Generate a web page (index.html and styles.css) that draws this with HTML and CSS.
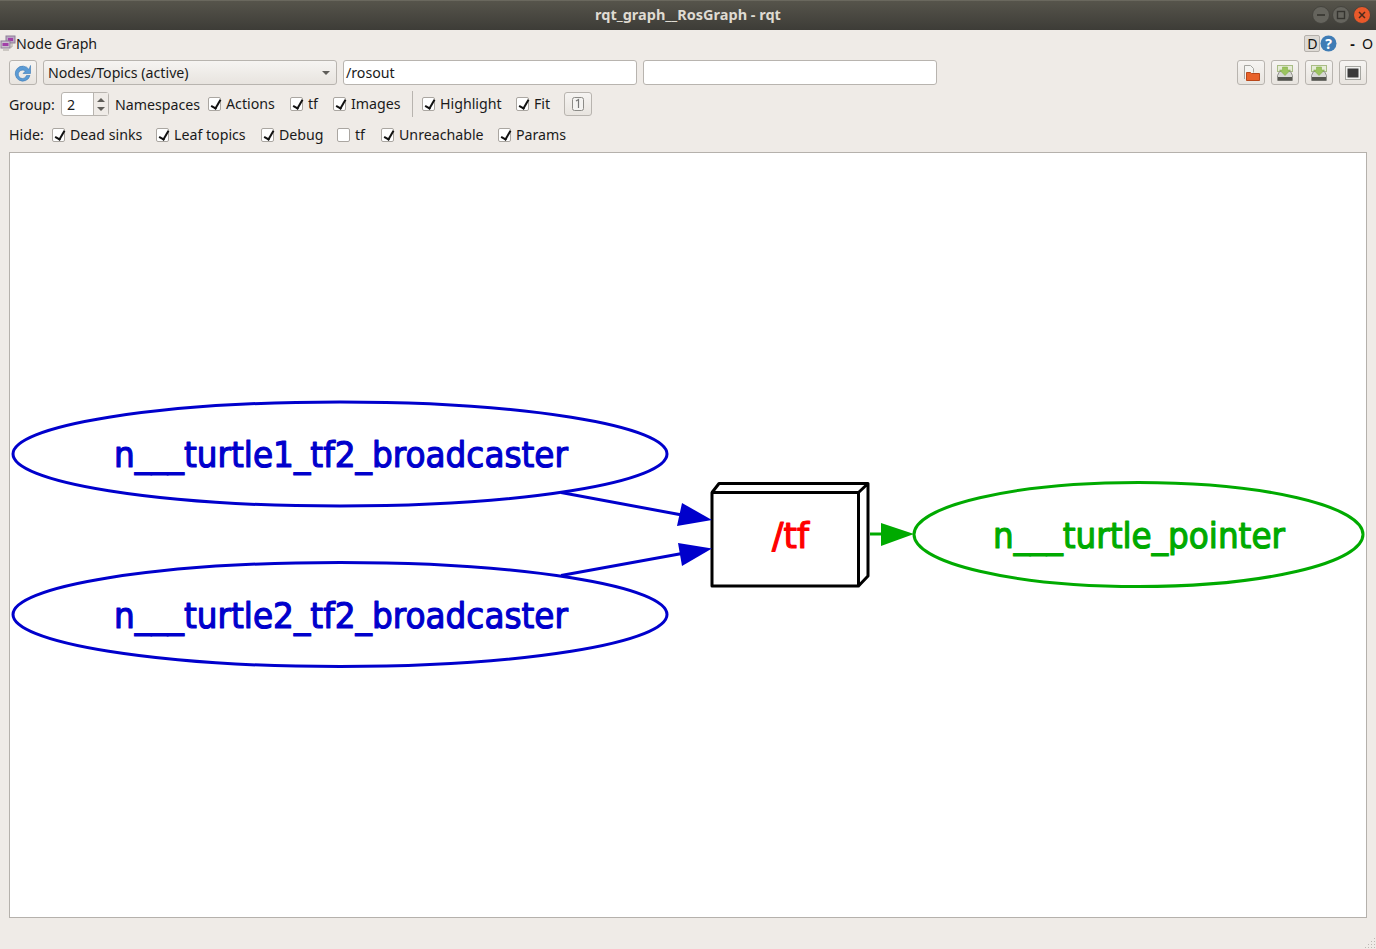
FILE: index.html
```html
<!DOCTYPE html>
<html lang="en">

<head>
  <meta charset="UTF-8">
  <title>rqt_graph__RosGraph - rqt</title>
  <link rel="stylesheet" href="styles.css">
</head>

<body>
  <div class="window">
    <header class="titlebar">
      <span class="title">rqt_graph__RosGraph - rqt</span>
      <div class="win-buttons">
        <svg class="win-btn" viewBox="0 0 18 18"><circle cx="9" cy="9" r="8.500" fill="#65645d" stroke="#45443e"/><path d="M5 9h8" stroke="#35342f" stroke-width="1.600"/></svg>
        <svg class="win-btn" viewBox="0 0 18 18"><circle cx="9" cy="9" r="8.500" fill="#65645d" stroke="#45443e"/><rect x="5.500" y="5.500" width="7" height="7" fill="none" stroke="#35342f" stroke-width="1.400"/></svg>
        <svg class="win-btn" viewBox="0 0 18 18"><circle cx="9" cy="9" r="8.500" fill="#e9592a" stroke="#45443e"/><path d="M6 6l6 6M12 6l-6 6" stroke="#4a2a1c" stroke-width="1.500"/></svg>
      </div>
    </header>

    <div class="plugin-bar">
      <svg class="plugin-icon" viewBox="0 0 16 16">
        <rect x="6" y="1" width="9" height="7" fill="#b9a6c4" stroke="#8d7f96"/>
        <rect x="8" y="3" width="5" height="3" fill="#a23fa8"/>
        <rect x="1" y="6" width="9" height="7" fill="#c9bfce" stroke="#8d7f96"/>
        <rect x="2.500" y="8" width="6" height="3" fill="#a23fa8"/>
        <path d="M3 15h6M12 8v4h-2" fill="none" stroke="#a9a5a0"/>
      </svg>
      <span class="plugin-name">Node Graph</span>
      <span class="bar-spacer"></span>
      <span class="help-d">D</span>
      <svg class="help-q" viewBox="0 0 17 17">
        <circle cx="8.500" cy="8.500" r="8" fill="#3f7cb5"/>
        <text x="8.500" y="13.500" text-anchor="middle" class="help-q-text">?</text>
      </svg>
      <span class="bar-dash">-</span>
      <span class="bar-o">O</span>
    </div>

    <div class="row row-top">
      <button class="tool-btn">
        <svg class="tool-icon" viewBox="0 0 18 18">
          <path d="M15 5.500A7.500 7.500 0 1 0 16 11.500h-3.500a4.200 4.200 0 1 1-1.200-4.300L9 9.500h7.500V1.500z" fill="#5b9bd5" stroke="#3a78b5" stroke-width=".6"/>
        </svg>
      </button>
      <div class="combo">
        <span>Nodes/Topics (active)</span>
        <span class="combo-arrow"></span>
      </div>
      <div class="text-input">/rosout</div>
      <div class="text-input"></div>
      <span class="bar-spacer"></span>
      <button class="tool-btn">
        <svg class="tool-icon" viewBox="0 0 18 18">
          <path d="M2.500 15V1.500h6l3 3v4" fill="#f4f4f2" stroke="#a5a5a0"/>
          <path d="M4.500 8.500h4l1 1h8v7h-13z" fill="#e8622a" stroke="#b9471a"/>
        </svg>
      </button>
      <button class="tool-btn">
        <svg class="tool-icon" viewBox="0 0 18 18">
          <rect x="1.500" y="1.500" width="15" height="6" fill="#e6ebd8" stroke="#a9bd85"/>
          <path d="M1.500 11.500l2-4h11l2 4v5h-15z" fill="#d8d8d4" stroke="#8f8f8a"/>
          <rect x="2" y="13" width="14" height="3.500" fill="#55554f"/>
          <path d="M6.500 3h5v3h3l-5.500 5.500L3.500 6h3z" fill="#9cc45f" stroke="#7aa83f" stroke-width=".5"/>
        </svg>
      </button>
      <button class="tool-btn">
        <svg class="tool-icon" viewBox="0 0 18 18">
          <rect x="1.500" y="1.500" width="15" height="6" fill="#e6ebd8" stroke="#a9bd85"/>
          <path d="M1.500 11.500l2-4h11l2 4v5h-15z" fill="#d8d8d4" stroke="#8f8f8a"/>
          <rect x="2" y="13" width="14" height="3.500" fill="#55554f"/>
          <path d="M6.500 3h5v3h3l-5.500 5.500L3.500 6h3z" fill="#9cc45f" stroke="#7aa83f" stroke-width=".5"/>
        </svg>
      </button>
      <button class="tool-btn">
        <svg class="tool-icon" viewBox="0 0 18 18">
          <rect x="1.500" y="2.500" width="15" height="13" fill="#f2f2f0" stroke="#a5a5a0"/>
          <rect x="3.500" y="4.500" width="11" height="9" fill="#3a3a3a"/>
        </svg>
      </button>
    </div>

    <div class="row row-group">
      <span class="label group-label">Group:</span>
      <div class="spin">
        <span class="spin-value">2</span>
        <span class="spin-arrows">
          <span class="spin-up"></span>
          <span class="spin-down"></span>
        </span>
      </div>
      <span class="label ns-label">Namespaces</span>
      <label class="check w-actions"><span class="box on"></span>Actions</label>
      <label class="check w-tf"><span class="box on"></span>tf</label>
      <label class="check w-images"><span class="box on"></span>Images</label>
      <span class="divider"></span>
      <label class="check w-highlight"><span class="box on"></span>Highlight</label>
      <label class="check w-fit"><span class="box on"></span>Fit</label>
      <button class="tool-btn small-btn">
        <svg class="tool-icon" viewBox="0 0 16 16">
          <rect x="2.500" y="1.500" width="11" height="13" rx="2" fill="#f4f3f1" stroke="#8c8b87"/>
          <path d="M6 5l2.500-1.500V12" fill="none" stroke="#777" stroke-width="1.200"/>
        </svg>
      </button>
    </div>

    <div class="row row-hide">
      <span class="label hide-label">Hide:</span>
      <label class="check w-dead"><span class="box on"></span>Dead sinks</label>
      <label class="check w-leaf"><span class="box on"></span>Leaf topics</label>
      <label class="check w-debug"><span class="box on"></span>Debug</label>
      <label class="check w-tf2"><span class="box"></span>tf</label>
      <label class="check w-unreach"><span class="box on"></span>Unreachable</label>
      <label class="check"><span class="box on"></span>Params</label>
    </div>

    <div class="canvas">
      <svg class="graph" viewBox="10 153 1356 764">
        <!-- nodes -->
        <ellipse class="edge-blue" cx="340" cy="454" rx="327" ry="52"/>
        <text class="node-label label-blue" x="114" y="467" textLength="454" lengthAdjust="spacingAndGlyphs">n___turtle1_tf2_broadcaster</text>
        <ellipse class="edge-blue" cx="340" cy="614.500" rx="327" ry="52"/>
        <text class="node-label label-blue" x="114" y="627.500" textLength="454" lengthAdjust="spacingAndGlyphs">n___turtle2_tf2_broadcaster</text>
        <ellipse class="edge-green" cx="1138.500" cy="534.500" rx="224.500" ry="52"/>
        <text class="node-label label-green" x="993" y="547.500" textLength="292" lengthAdjust="spacingAndGlyphs">n___turtle_pointer</text>

        <!-- topic box -->
        <path class="topic-box" d="M712 492.500H858.500V586H712zM712 492.500L719 483.500H868L858.500 492.500M868 483.500V576L858.500 586"/>
        <text class="node-label label-red" x="772" y="547.500" textLength="37" lengthAdjust="spacingAndGlyphs">/tf</text>

        <!-- edges -->
        <path class="edge-blue" d="M561 492.500L682 515"/>
        <polygon class="fill-blue" points="712,520 682,503 677,526"/>
        <path class="edge-blue" d="M561 575.500L682 553.500"/>
        <polygon class="fill-blue" points="712,548.500 678,543 682,566"/>
        <path class="edge-green" d="M870 534H884"/>
        <polygon class="fill-green" points="914,534 881,523 881,546"/>
      </svg>
    </div>

    <svg class="grip" viewBox="0 0 12 12">
      <g fill="#bdb9b3">
        <rect x="10" y="1" width="1" height="1"/>
        <rect x="7" y="4" width="1" height="1"/>
        <rect x="10" y="4" width="1" height="1"/>
        <rect x="4" y="7" width="1" height="1"/>
        <rect x="7" y="7" width="1" height="1"/>
        <rect x="10" y="7" width="1" height="1"/>
        <rect x="1" y="10" width="1" height="1"/>
        <rect x="4" y="10" width="1" height="1"/>
        <rect x="7" y="10" width="1" height="1"/>
        <rect x="10" y="10" width="1" height="1"/>
      </g>
    </svg>
  </div>
</body>

</html>
```

FILE: styles.css
```css
* {
  box-sizing: border-box;
}

html,
body {
  margin: 0;
  height: 100%;
  overflow: hidden;
}

body {
  background-color: #efebe7;
  color: #1a1a1a;
  font-family: "Noto Sans", "Open Sans", sans-serif;
  font-size: 14.2px;
}

.window {
  position: relative;
  width: 1376px;
  height: 949px;
  display: flex;
  flex-direction: column;
}

/* title bar */
.titlebar {
  position: relative;
  height: 30px;
  flex: none;
  display: flex;
  align-items: center;
  justify-content: center;
  padding-bottom: 3px;
  background: linear-gradient(#56544b, #3d3c37);
  border-top: 1px solid #6a685e;
}

.title {
  color: #dfdbd2;
  font-weight: 700;
  font-size: 14.5px;
}

.win-buttons {
  position: absolute;
  top: 5px;
  right: 5.500px;
  display: flex;
  gap: 2.500px;
}

.win-btn {
  width: 18px;
  height: 18px;
}

/* Node Graph bar */
.plugin-bar {
  height: 28px;
  padding-bottom: 2px;
  flex: none;
  display: flex;
  align-items: center;
}

.plugin-icon {
  width: 16px;
  height: 16px;
}

.bar-spacer {
  flex: 1;
}

.help-d {
  width: 16px;
  height: 17px;
  line-height: 15px;
  text-align: center;
  background-color: #dedad5;
  border: 1px solid #b5b1ac;
  border-radius: 2px;
  color: #111;
}

.help-q {
  width: 17px;
  height: 17px;
  margin-right: 1px;
}

.help-q-text {
  fill: #fff;
  font-size: 14px;
  font-weight: 700;
}

.bar-dash {
  margin-left: 12px;
  font-weight: 700;
  color: #111;
}

.bar-o {
  margin-left: 7px;
  margin-right: 3px;
  color: #111;
}

/* toolbar rows */
.row {
  display: flex;
  align-items: center;
  padding: 0 9px;
  flex: none;
}

.row-top {
  height: 25px;
  margin-top: 2px;
  gap: 6px;
}

.row-group {
  height: 24px;
  margin-top: 7px;
}

.row-hide {
  height: 21px;
  margin-top: 8px;
}

.tool-btn {
  width: 28px;
  height: 25px;
  padding: 0;
  display: flex;
  align-items: center;
  justify-content: center;
  background: linear-gradient(#f6f4f2, #e8e4df);
  border: 1px solid #b8b4af;
  border-radius: 3px;
}

.tool-icon {
  width: 18px;
  height: 18px;
}

.small-btn {
  height: 24px;
}

.small-btn .tool-icon {
  width: 16px;
  height: 16px;
}

.combo {
  width: 294px;
  height: 25px;
  padding: 0 6px 0 4px;
  display: flex;
  align-items: center;
  justify-content: space-between;
  background: linear-gradient(#f6f4f2, #e8e4df);
  border: 1px solid #b8b4af;
  border-radius: 3px;
}

.combo-arrow {
  width: 0;
  height: 0;
  border-left: 4px solid transparent;
  border-right: 4px solid transparent;
  border-top: 4px solid #5f5d59;
}

.text-input {
  width: 294px;
  height: 25px;
  padding: 0 2px;
  line-height: 23px;
  background-color: #fff;
  border: 1px solid #b8b4af;
  border-radius: 3px;
}

.label {
  white-space: nowrap;
}

.group-label {
  width: 52px;
}

.spin {
  width: 48px;
  height: 24px;
  display: flex;
  background-color: #fff;
  border: 1px solid #b8b4af;
  border-radius: 3px;
}

.spin-value {
  flex: 1;
  padding-left: 5px;
  line-height: 24px;
}

.spin-arrows {
  width: 15px;
  display: flex;
  flex-direction: column;
  align-items: center;
  justify-content: center;
  gap: 5px;
  background-color: #efebe7;
  border-left: 1px solid #b8b4af;
}

.spin-up {
  border-left: 4px solid transparent;
  border-right: 4px solid transparent;
  border-bottom: 4px solid #5f5d59;
}

.spin-down {
  border-left: 4px solid transparent;
  border-right: 4px solid transparent;
  border-top: 4px solid #5f5d59;
}

.ns-label {
  margin-left: 6px;
  width: 93px;
}

.hide-label {
  width: 43px;
}

.check {
  display: flex;
  align-items: center;
  gap: 5px;
  white-space: nowrap;
}

.box {
  position: relative;
  width: 13px;
  height: 14px;
  flex: none;
  background-color: #fff;
  border: 1px solid #aaa6a1;
  border-radius: 2px;
}

.box.on::after {
  content: "";
  position: absolute;
  left: 3.500px;
  top: 0;
  width: 4px;
  height: 9px;
  border: solid #111;
  border-width: 0 2px 2px 0;
  transform: rotate(30deg);
}

.row-group .check {
  margin-top: -1px;
}

.w-actions {
  width: 82px;
}

.w-tf {
  width: 43px;
}

.w-images {
  width: 79px;
}

.w-highlight {
  width: 94px;
}

.w-fit {
  width: 48px;
}

.w-dead {
  width: 104px;
}

.w-leaf {
  width: 105px;
}

.w-debug {
  width: 76px;
}

.w-tf2 {
  width: 44px;
}

.w-unreach {
  width: 117px;
}

.divider {
  width: 1px;
  height: 26px;
  margin-right: 9px;
  background-color: #b8b4af;
}

/* graph canvas */
.canvas {
  height: 766px;
  margin: 7px 9px 0;
  flex: none;
  background-color: #fff;
  border: 1px solid #b5b1ac;
}

.graph {
  display: block;
  width: 100%;
  height: 100%;
}

.node-label {
  font-family: "DejaVu Sans", sans-serif;
  font-size: 35px;
  stroke-width: 1.200;
  stroke-linejoin: round;
}

.label-blue {
  fill: #0000cc;
  stroke: #0000cc;
}

.label-green {
  fill: #00aa00;
  stroke: #00aa00;
}

.label-red {
  fill: #ff0000;
  stroke: #ff0000;
}

.edge-blue,
.edge-green,
.topic-box {
  fill: none;
  stroke-width: 3;
}

.edge-blue {
  stroke: #0000cc;
}

.edge-green {
  stroke: #00aa00;
}

.topic-box {
  stroke: #000;
  stroke-linejoin: round;
}

.fill-blue {
  fill: #0000cc;
}

.fill-green {
  fill: #00aa00;
}

.grip {
  position: absolute;
  right: 0;
  bottom: 0;
  width: 12px;
  height: 12px;
}
```
